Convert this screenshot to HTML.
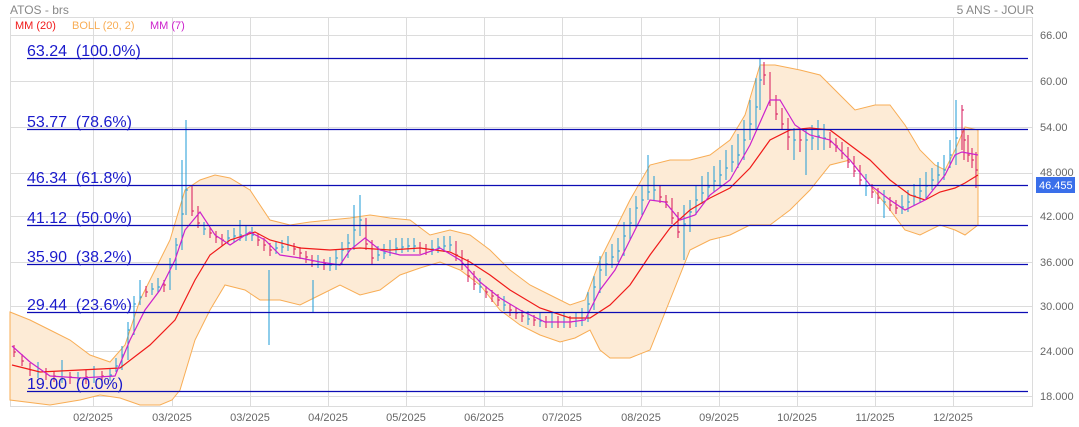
<!DOCTYPE html>
<html><head><meta charset="utf-8"><style>
html,body{margin:0;padding:0;background:#fff;width:1079px;height:427px;overflow:hidden}
svg{display:block;font-family:"Liberation Sans",sans-serif}
</style></head><body>
<svg width="1079" height="427" viewBox="0 0 1079 427">
<rect width="1079" height="427" fill="#fff"/>
<g stroke="#dcdcdc" stroke-width="1" fill="none">
<rect x="10.5" y="17.5" width="1022" height="389"/>
<line x1="93.5" y1="17" x2="93.5" y2="406"/><line x1="172.5" y1="17" x2="172.5" y2="406"/>
<line x1="250.5" y1="17" x2="250.5" y2="406"/><line x1="328.5" y1="17" x2="328.5" y2="406"/>
<line x1="406.5" y1="17" x2="406.5" y2="406"/><line x1="484.5" y1="17" x2="484.5" y2="406"/>
<line x1="562.5" y1="17" x2="562.5" y2="406"/><line x1="641.5" y1="17" x2="641.5" y2="406"/>
<line x1="719.5" y1="17" x2="719.5" y2="406"/><line x1="797.5" y1="17" x2="797.5" y2="406"/>
<line x1="875.5" y1="17" x2="875.5" y2="406"/><line x1="953.5" y1="17" x2="953.5" y2="406"/>
<line x1="10" y1="35.5" x2="1032" y2="35.5"/><line x1="10" y1="81.5" x2="1032" y2="81.5"/>
<line x1="10" y1="127.5" x2="1032" y2="127.5"/><line x1="10" y1="173.5" x2="1032" y2="173.5"/>
<line x1="10" y1="216.5" x2="1032" y2="216.5"/><line x1="10" y1="262.5" x2="1032" y2="262.5"/>
<line x1="10" y1="306.5" x2="1032" y2="306.5"/><line x1="10" y1="351.5" x2="1032" y2="351.5"/>
<line x1="10" y1="396.5" x2="1032" y2="396.5"/>
</g>
<polygon fill="#fdebd6" stroke="#f8ad55" stroke-width="1" points="10,312 30,320 50,330 70,340 90,355 110,362 125,345 140,300 155,270 170,240 185,190 200,180 215,175 230,178 250,190 270,220 290,225 310,222 330,220 350,218 370,215 390,218 410,220 430,235 450,230 470,235 490,250 510,270 530,285 550,295 570,305 585,300 600,260 615,230 630,200 650,165 670,160 690,160 710,155 730,140 745,115 760,65 775,65 800,70 820,75 840,95 855,110 875,105 890,105 905,125 920,150 935,165 945,170 955,150 965,127 978,130 978,225 965,235 955,230 940,225 920,235 905,230 890,210 870,185 850,160 830,165 810,190 790,210 770,225 750,225 730,235 710,240 690,250 670,300 650,350 630,358 610,358 600,350 590,330 575,338 560,342 540,335 520,325 500,310 480,285 460,270 440,262 420,268 400,275 380,290 360,295 340,285 320,295 300,305 280,300 260,300 245,290 225,285 210,310 195,340 180,390 172,400 160,405 140,405 120,398 100,395 80,400 50,405 10,400"/>
<path fill="none" stroke="#d6165a" stroke-width="1" d="M14 345V357M14 352h2M22 354V366M22 361h2M30 363V376M30 370h2M46 368V380M46 374h2M54 371V382M54 376h2M70 372V384M70 377h2M86 370V384M86 377h2M102 371V382M102 376h2M146 286V297M146 292h2M164 280V292M164 285h2M192 186V216M192 211h2M198 206V228M198 223h2M210 227V238M210 233h2M216 231V243M216 237h2M222 234V246M222 240h2M258 233V246M258 240h2M264 238V251M264 245h2M270 243V256M270 250h2M294 243V255M294 249h2M300 247V259M300 253h2M306 251V263M306 257h2M312 255V267M312 261h2M324 259V270M324 264h2M366 218V250M366 244h2M372 240V264M372 258h2M420 242V254M420 248h2M426 244V255M426 249h2M456 241V261M456 255h2M462 250V270M462 264h2M468 259V282M468 276h2M474 271V290M474 284h2M486 286V298M486 292h2M492 290V302M492 296h2M498 294V306M498 300h2M510 304V316M510 310h2M516 307V319M516 313h2M522 310V322M522 316h2M534 315V326M534 320h2M546 316V328M546 322h2M558 316V328M558 322h2M570 316V328M570 322h2M660 186V203M660 197h2M666 195V208M666 202h2M672 198V224M672 218h2M678 212V238M678 232h2M764 62V85M764 75h2M770 72V106M770 100h2M776 95V120M776 114h2M782 108V130M782 124h2M788 118V150M788 137h2M800 128V152M800 140h2M830 132V148M830 142h2M836 138V152M836 146h2M842 142V159M842 153h2M848 147V168M848 162h2M854 156V177M854 171h2M860 165V186M860 180h2M872 184V198M872 192h2M878 188V204M878 198h2M890 197V211M890 205h2M896 200V214M896 208h2M962 105V150M962 110h2M964 128V160M964 140h2M968 135V162M968 155h2M972 148V168M972 160h2M976 152V188M976 170h2"/>
<path fill="none" stroke="#1e9bd7" stroke-width="1" d="M38 362V378M38 372h2M62 360V383M62 377h2M78 372V384M78 378h2M94 366V383M94 377h2M110 368V381M110 375h2M116 358V372M116 366h2M122 346V370M122 355h2M128 322V360M128 330h2M134 296V335M134 304h2M140 280V305M140 297h2M152 283V295M152 289h2M158 278V293M158 287h2M170 258V290M170 265h2M176 238V270M176 245h2M182 160V250M182 214h2M186 120V215M186 190h2M204 222V235M204 229h2M228 230V244M228 238h2M234 228V242M234 236h2M240 220V241M240 235h2M246 226V241M246 235h2M252 227V241M252 235h2M269 270V345M276 242V254M276 248h2M282 240V253M282 247h2M288 236V251M288 245h2M313 280V312M318 255V268M318 262h2M330 257V271M330 265h2M336 250V270M336 258h2M342 242V265M342 250h2M348 234V258M348 243h2M354 205V250M354 230h2M360 195V236M360 220h2M378 246V261M378 255h2M384 244V259M384 253h2M390 240V256M390 250h2M396 238V254M396 248h2M402 238V253M402 247h2M408 238V252M408 246h2M414 238V252M414 246h2M432 240V255M432 249h2M438 238V253M438 247h2M444 236V252M444 246h2M450 236V251M450 245h2M480 278V293M480 287h2M504 296V311M504 305h2M528 311V325M528 319h2M540 312V327M540 321h2M552 313V328M552 322h2M564 313V328M564 322h2M576 312V327M576 321h2M582 308V326M582 320h2M588 292V322M588 304h2M594 276V310M594 287h2M600 256V293M600 270h2M606 252V276M606 264h2M612 244V268M612 257h2M618 238V262M618 251h2M624 222V256M624 236h2M630 208V240M630 223h2M636 196V228M636 208h2M642 185V215M642 200h2M648 155V200M648 192h2M654 176V200M654 190h2M684 205V260M684 224h2M690 200V232M690 212h2M696 186V215M696 200h2M702 176V204M702 193h2M708 172V198M708 187h2M714 166V192M714 181h2M720 160V188M720 175h2M726 150V180M726 168h2M732 145V172M732 162h2M738 134V168M738 155h2M744 120V160M744 140h2M750 100V140M750 124h2M756 78V130M756 107h2M760 58V110M760 80h2M794 128V160M794 140h2M806 128V175M806 140h2M812 125V150M812 138h2M818 120V150M818 136h2M824 124V150M824 138h2M866 174V196M866 186h2M884 190V218M884 202h2M902 195V214M902 207h2M908 190V212M908 202h2M914 184V206M914 196h2M920 178V202M920 191h2M926 172V198M926 186h2M932 168V190M932 180h2M938 162V186M938 175h2M944 155V180M944 170h2M950 140V168M950 155h2M956 100V165M956 138h2"/>
<polyline fill="none" stroke="#f01a1a" stroke-width="1.2" points="12,365 40,372 80,370 120,368 150,345 175,320 195,280 210,255 230,240 255,232 270,240 300,248 330,250 360,248 390,250 420,248 450,252 470,262 490,275 510,290 540,308 570,318 590,318 610,305 630,285 650,255 670,228 690,210 710,198 730,188 750,168 770,140 790,130 810,128 830,130 850,145 870,160 890,180 910,195 925,200 940,192 955,188 965,183 978,175"/>
<polyline fill="none" stroke="#cc22cc" stroke-width="1.2" points="12,346 30,362 50,376 80,378 115,376 130,340 145,310 160,290 175,260 185,230 200,212 215,235 230,245 250,232 265,240 280,255 300,258 320,262 340,265 350,250 365,238 380,250 400,255 420,255 440,248 460,260 480,282 500,298 520,310 545,322 570,322 585,320 600,290 615,270 630,240 650,200 665,202 680,220 695,215 710,195 730,180 750,145 770,100 780,100 795,125 810,135 830,140 850,160 870,185 890,200 905,210 925,200 945,175 955,155 962,152 978,155"/>
<g stroke="#0c0cb4" stroke-width="1.2">
<line x1="27" y1="58.5" x2="1028" y2="58.5"/><line x1="27" y1="129.5" x2="1028" y2="129.5"/>
<line x1="27" y1="185.5" x2="1028" y2="185.5"/><line x1="27" y1="225.5" x2="1028" y2="225.5"/>
<line x1="27" y1="264.5" x2="1028" y2="264.5"/><line x1="27" y1="312.5" x2="1028" y2="312.5"/>
<line x1="27" y1="391.5" x2="1028" y2="391.5"/>
</g>
<g fill="#1a1acc" font-size="16">
<text x="27" y="56">63.24&#160; (100.0%)</text><text x="27" y="127">53.77&#160; (78.6%)</text>
<text x="27" y="183">46.34&#160; (61.8%)</text><text x="27" y="223">41.12&#160; (50.0%)</text>
<text x="27" y="262">35.90&#160; (38.2%)</text><text x="27" y="310">29.44&#160; (23.6%)</text>
<text x="27" y="389">19.00&#160; (0.0%)</text>
</g>
<text x="10" y="14" font-size="12" fill="#888">ATOS - brs</text>
<text x="1034" y="14" font-size="12" fill="#888" text-anchor="end">5 ANS - JOUR</text>
<g font-size="11"><text x="15" y="29" fill="#f01a1a">MM (20)</text><text x="72" y="29" fill="#f8ad55">BOLL (20, 2)</text><text x="150" y="29" fill="#cc22cc">MM (7)</text></g>
<g font-size="11" fill="#666">
<text x="1040" y="39">66.00</text><text x="1040" y="85">60.00</text><text x="1040" y="131">54.00</text>
<text x="1040" y="176">48.000</text><text x="1040" y="220">42.000</text><text x="1040" y="266">36.000</text>
<text x="1040" y="310">30.000</text><text x="1040" y="355">24.000</text><text x="1040" y="400">18.000</text>
</g>
<rect x="1036" y="177" width="39" height="16" fill="#3a6fea"/>
<text x="1039" y="189" font-size="11" fill="#fff">46.455</text>
<g font-size="11" fill="#666" text-anchor="middle">
<text x="93" y="421">02/2025</text><text x="172" y="421">03/2025</text><text x="250" y="421">03/2025</text>
<text x="328" y="421">04/2025</text><text x="406" y="421">05/2025</text><text x="484" y="421">06/2025</text>
<text x="562" y="421">07/2025</text><text x="641" y="421">08/2025</text><text x="719" y="421">09/2025</text>
<text x="797" y="421">10/2025</text><text x="875" y="421">11/2025</text><text x="953" y="421">12/2025</text>
</g>
</svg>
</body></html>
